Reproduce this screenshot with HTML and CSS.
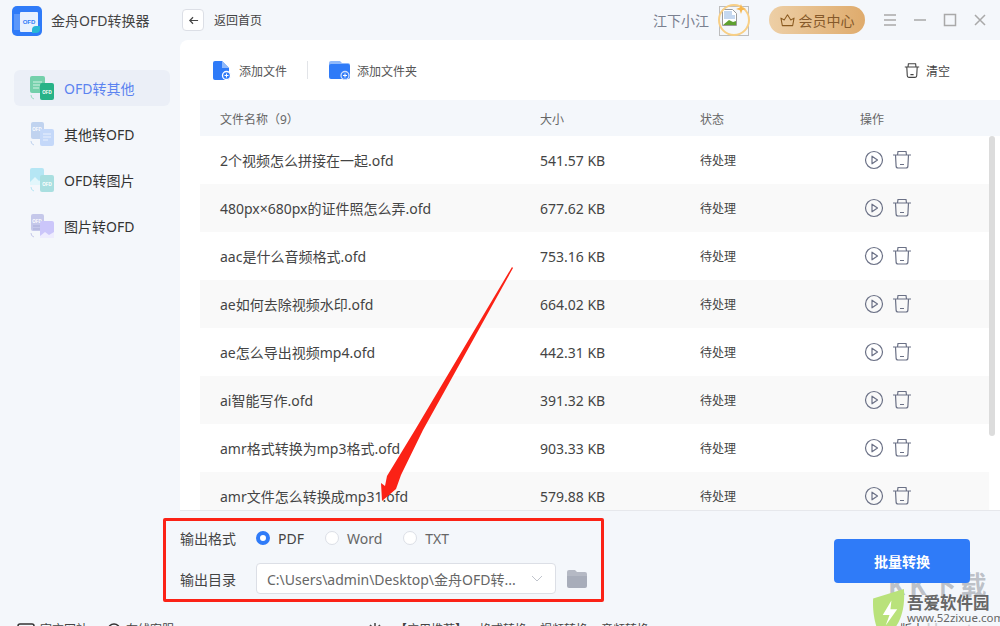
FILE: index.html
```html
<!DOCTYPE html>
<html lang="zh">
<head>
<meta charset="utf-8">
<title>金舟OFD转换器</title>
<link rel="stylesheet" href="styles.css">
</head>
<body>
<div class="app">
  <header class="topbar">
    <div class="brand">
      <svg class="logo" viewBox="0 0 30 30"><rect width="30" height="30" rx="5" fill="#2f7bf8"/><rect x="2" y="8" width="7" height="16" fill="#5b97fa"/><rect x="8" y="6" width="18" height="20" rx="1" fill="#e8f1fe"/><text x="17" y="17.500" class="logo-text">OFD</text><path d="M20 24a4 4 0 0 1 4-4h4v3a4 4 0 0 1-4 4h-4z" fill="#27b7d6"/></svg>
      <span class="brand-name">金舟OFD转换器</span>
    </div>
    <div class="back">
      <span class="back-btn"><svg viewBox="0 0 12 12" class="back-ico"><path d="M11 6H2M5.500 2.500 2 6l3.500 3.500" fill="none" stroke="#444" stroke-width="1.300"/></svg></span>
      <span class="back-text">返回首页</span>
    </div>
    <div class="top-right">
      <span class="user">江下小江</span>
      <span class="avatar">
        <svg viewBox="0 0 30 30" class="broken"><rect x=".5" y=".5" width="29" height="29" fill="none" stroke="#bdbdbd"/><path d="M3.500 3.500h10l4 4v12h-14z" fill="#fff" stroke="#9a9a9a"/><path d="M5 5h8v4h3v4H5z" fill="#c5d8f0"/><path d="M4 19l6-5 4 2 3-1v4z" fill="#5ea02f"/></svg>
        <span class="ring"></span>
        <svg viewBox="0 0 10 10" class="spark"><path d="M5 0l1.200 3.500L10 5 6.200 6.300 5 10 3.800 6.300 0 5l3.800-1.500z" fill="#f6b64e"/></svg>
      </span>
      <span class="vip">
        <svg viewBox="0 0 16 14" class="crown"><path d="M1 5l3.500 2L8 1.500 11.500 7 15 5l-1.500 8h-11z" fill="none" stroke="#8a5a20" stroke-width="1.100" stroke-linejoin="round"/></svg>
        会员中心
      </span>
      <div class="win">
        <svg viewBox="0 0 14 14" class="win-ico"><path d="M1 2h12M1 7h12M1 12h12" stroke="#a9a9a9" stroke-width="1.500"/></svg>
        <svg viewBox="0 0 14 14" class="win-ico"><path d="M1 7h12" stroke="#a9a9a9" stroke-width="1.500"/></svg>
        <svg viewBox="0 0 14 14" class="win-ico"><rect x="1.500" y="1.500" width="11" height="11" fill="none" stroke="#a9a9a9" stroke-width="1.500"/></svg>
        <svg viewBox="0 0 14 14" class="win-ico"><path d="M2 2l10 10M12 2 2 12" stroke="#a9a9a9" stroke-width="1.500"/></svg>
      </div>
    </div>
  </header>

  <div class="middle">
    <nav class="side">
      <a class="nav-item active">
        <svg viewBox="0 0 24 24" class="nav-ico"><rect x="0" y="0" width="15" height="17" rx="2" fill="#74d0ab"/><path d="M3 6h9M3 9h9M3 12h6" stroke="#d4f2e5"/><rect x="10" y="7" width="14" height="17" rx="2" fill="#27b287"/><text x="17" y="17.500" class="nav-tx">OFD</text><path d="M1 19a4 4 0 0 0 3 4" fill="none" stroke="#9adcc2"/></svg>
        <span>OFD转其他</span>
      </a>
      <a class="nav-item">
        <svg viewBox="0 0 24 24" class="nav-ico"><rect x="1" y="0" width="13" height="17" rx="2" fill="#c0d3ef"/><text x="7" y="9" class="nav-tx">OFD</text><rect x="10" y="7" width="14" height="17" rx="2" fill="#c4d8f9"/><path d="M13 12h8M13 15h8M13 18h5" stroke="#eaf1fd"/><path d="M1 19a4 4 0 0 0 3 4" fill="none" stroke="#c0d3ef"/></svg>
        <span>其他转OFD</span>
      </a>
      <a class="nav-item">
        <svg viewBox="0 0 24 24" class="nav-ico"><rect x="0" y="0" width="14" height="17" rx="2" fill="#b5e6f4"/><path d="M0 14l5-5 4 4 5-3v7H0z" fill="#e2f6fb"/><rect x="10" y="7" width="14" height="17" rx="2" fill="#a9dfe0"/><text x="17" y="17.500" class="nav-tx">OFD</text><path d="M1 19a4 4 0 0 0 3 4" fill="none" stroke="#b5e6f4"/></svg>
        <span>OFD转图片</span>
      </a>
      <a class="nav-item">
        <svg viewBox="0 0 24 24" class="nav-ico"><rect x="1" y="0" width="13" height="17" rx="2" fill="#c5c8ea"/><text x="7" y="9" class="nav-tx">OFD</text><path d="M3 12h9M3 15h9" stroke="#a9acd8"/><rect x="10" y="7" width="14" height="17" rx="2" fill="#cbc6fa"/><path d="M10 22l5-4 4 3 5-3v6H10z" fill="#eeecfe"/><path d="M1 19a4 4 0 0 0 3 4" fill="none" stroke="#c5c8ea"/></svg>
        <span>图片转OFD</span>
      </a>
    </nav>

    <main class="panel">
      <div class="toolbar">
        <div class="tool-left">
          <span class="tool">
            <svg viewBox="0 0 18 19" class="tool-ico"><path d="M0 2a2 2 0 0 1 2-2h7l7 7v10a2 2 0 0 1-2 2H2a2 2 0 0 1-2-2z" fill="#2f7bf8"/><path d="M9 0l7 7H9z" fill="#8fb9fb"/><circle cx="13.500" cy="14.500" r="4" fill="#2f7bf8" stroke="#fff" stroke-width="1.300"/><path d="M11.500 14.500h4M13.500 12.500v4" stroke="#fff"/></svg>
            添加文件
          </span>
          <span class="tool-sep"></span>
          <span class="tool tool-folder">
            <svg viewBox="0 0 21 19" class="tool-ico wide"><path d="M0 2a2 2 0 0 1 2-2h9l2 2h6a2 2 0 0 1 2 2v2H0z" fill="#8fb9fb"/><rect y="3" width="21" height="15" rx="2" fill="#2f7bf8"/><circle cx="16" cy="14.500" r="4" fill="#2f7bf8" stroke="#cfe0fc" stroke-width="1.300"/><path d="M14 14.500h4M16 12.500v4" stroke="#fff"/></svg>
            添加文件夹
          </span>
        </div>
        <span class="tool clear">
          <svg viewBox="0 0 20 20" class="clear-ico"><path d="M1 5h18M5 5l.5-4h9L15 5M3.500 5l.6 11a2 2 0 0 0 2 2h7.800a2 2 0 0 0 2-2l.6-11M8 14.500h4" fill="none" stroke="#444" stroke-width="1.400"/></svg>
          清空
        </span>
      </div>

      <div class="thead">
        <span class="c-name">文件名称（9）</span><span class="c-size">大小</span><span class="c-state">状态</span><span class="c-op">操作</span>
      </div>

      <div class="list">
        <div class="rows">
          <div class="row"><span class="c-name">2个视频怎么拼接在一起.ofd</span><span class="c-size">541.57 KB</span><span class="c-state">待处理</span><span class="c-op"><svg class="op"><use href="#play"/></svg><svg class="op"><use href="#trash"/></svg></span></div>
          <div class="row alt"><span class="c-name">480px×680px的证件照怎么弄.ofd</span><span class="c-size">677.62 KB</span><span class="c-state">待处理</span><span class="c-op"><svg class="op"><use href="#play"/></svg><svg class="op"><use href="#trash"/></svg></span></div>
          <div class="row"><span class="c-name">aac是什么音频格式.ofd</span><span class="c-size">753.16 KB</span><span class="c-state">待处理</span><span class="c-op"><svg class="op"><use href="#play"/></svg><svg class="op"><use href="#trash"/></svg></span></div>
          <div class="row alt"><span class="c-name">ae如何去除视频水印.ofd</span><span class="c-size">664.02 KB</span><span class="c-state">待处理</span><span class="c-op"><svg class="op"><use href="#play"/></svg><svg class="op"><use href="#trash"/></svg></span></div>
          <div class="row"><span class="c-name">ae怎么导出视频mp4.ofd</span><span class="c-size">442.31 KB</span><span class="c-state">待处理</span><span class="c-op"><svg class="op"><use href="#play"/></svg><svg class="op"><use href="#trash"/></svg></span></div>
          <div class="row alt"><span class="c-name">ai智能写作.ofd</span><span class="c-size">391.32 KB</span><span class="c-state">待处理</span><span class="c-op"><svg class="op"><use href="#play"/></svg><svg class="op"><use href="#trash"/></svg></span></div>
          <div class="row"><span class="c-name">amr格式转换为mp3格式.ofd</span><span class="c-size">903.33 KB</span><span class="c-state">待处理</span><span class="c-op"><svg class="op"><use href="#play"/></svg><svg class="op"><use href="#trash"/></svg></span></div>
          <div class="row alt"><span class="c-name">amr文件怎么转换成mp31.ofd</span><span class="c-size">579.88 KB</span><span class="c-state">待处理</span><span class="c-op"><svg class="op"><use href="#play"/></svg><svg class="op"><use href="#trash"/></svg></span></div>
        </div>
        <div class="scroll"><div class="thumb"></div></div>
      </div>
    </main>
  </div>

  <section class="bottom">
    <div class="output">
      <div class="out-row">
        <span class="out-label">输出格式</span>
        <span class="radio on"></span><span class="r-text dark">PDF</span>
        <span class="radio"></span><span class="r-text">Word</span>
        <span class="radio"></span><span class="r-text">TXT</span>
      </div>
      <div class="out-row">
        <span class="out-label">输出目录</span>
        <span class="select">C:\Users\admin\Desktop\金舟OFD转...<svg viewBox="0 0 12 7" class="chev"><path d="M1 1l5 5 5-5" fill="none" stroke="#c0c4cc"/></svg></span>
        <svg viewBox="0 0 20 18" class="folder"><path d="M0 2a2 2 0 0 1 2-2h6l2 2h8a2 2 0 0 1 2 2v2H0z" fill="#b5b9c4"/><path d="M0 6h20v10a2 2 0 0 1-2 2H2a2 2 0 0 1-2-2z" fill="#a8adba"/></svg>
      </div>
    </div>
    <button class="convert">批量转换</button>
  </section>

  <footer class="foot">
    <span class="foot-item"><svg viewBox="0 0 18 14" class="foot-ico"><rect x="1" y="1" width="16" height="16" rx="2" fill="none" stroke="#333" stroke-width="1.500"/></svg>官方网站</span>
    <span class="foot-item"><svg viewBox="0 0 14 14" class="foot-ico sm"><circle cx="7" cy="7" r="6" fill="none" stroke="#333" stroke-width="1.500"/></svg>在线客服</span>
    <span class="foot-mid"><svg viewBox="0 0 14 14" class="foot-ico sm"><path d="M7 0v14M0 7h14M2 2l10 10M12 2 2 12" stroke="#444" stroke-width="1.500"/></svg><span class="foot-rec">【应用推荐】</span><span>格式转换</span><span>视频转换</span><span>音频转换</span></span>
    <span class="foot-ver">版本</span>
  </footer>
</div>

<svg class="defs" aria-hidden="true">
  <symbol id="play" viewBox="0 0 20 20"><circle cx="10" cy="10" r="8.500" fill="none" stroke="#6b7186" stroke-width="1.200"/><path d="M8 6.200v7.600l5.500-3.800z" fill="none" stroke="#6b7186" stroke-width="1.200" stroke-linejoin="round"/></symbol>
  <symbol id="trash" viewBox="0 0 20 20"><path d="M1 5h18M5.500 5l.5-3.500h8L14.500 5M3.500 5l.6 11a2 2 0 0 0 2 2h7.800a2 2 0 0 0 2-2l.6-11M8 14.500h4" fill="none" stroke="#6b7186" stroke-width="1.200"/></symbol>
</svg>

<div class="overlay">
  <svg viewBox="0 0 1000 626" class="arrow"><path d="M512 267 513 268 423 430 401 475 396 489 382 501 381 483 385 486 387 476 415 430z" fill="#fb2216"/></svg>
  <div class="redbox"></div>
  <div class="watermark">
    <span class="wm-ghost">KK下载</span>
    <svg viewBox="0 0 36 52" class="shield"><path d="M1 10 33 0C35 26 26 44 10 52 3 40 0 24 1 10z" fill="#b9e27b"/><path d="M20 12 11 27h7l-4 11 12-17h-7z" fill="#fff"/></svg>
    <span class="wm-title">吾爱软件园</span>
    <span class="wm-url">www.52zixue.com</span>
    <span class="wm-faint">www.kkx.net</span>
  </div>
</div>
</body>
</html>
```
FILE: styles.css
```css
* { box-sizing: border-box; }
html, body { margin: 0; padding: 0; }
body {
  width: 1000px; height: 626px; overflow: hidden; position: relative;
  background: #f4f7fb; color: #333;
  font-family: "Noto Sans", "Noto Sans CJK SC", sans-serif; font-size: 14px;
}
.app { display: flex; flex-direction: column; height: 626px; }
.topbar { height: 40px; display: flex; align-items: center; flex-shrink: 0; }
.brand { width: 182px; padding-left: 12px; display: flex; align-items: center; gap: 9px; }
.logo { width: 30px; height: 30px; margin-top: 2px; }
.logo-text { font: bold 6px "Liberation Sans", sans-serif; fill: #2f7bf8; text-anchor: middle; }
.brand-name { font-size: 14px; color: #444; }
.back { display: flex; align-items: center; gap: 10px; }
.back-btn { width: 22px; height: 22px; border: 1px solid #dcdfe6; border-radius: 4px; background: #fff; display: flex; align-items: center; justify-content: center; }
.back-ico { width: 11px; height: 11px; }
.back-text { font-size: 12px; color: #444; }
.top-right { margin-left: auto; display: flex; align-items: center; height: 40px; }
.user { font-size: 14px; color: #7a8090; margin-right: 10px; }
.avatar { position: relative; width: 30px; height: 30px; margin-right: 20px; margin-top: 2px; }
.broken { width: 30px; height: 30px; display: block; }
.ring { position: absolute; left: -1px; top: -2px; width: 32px; height: 32px; border: 2px solid #f8cf85; border-radius: 50%; }
.spark { position: absolute; right: 3px; top: -2px; width: 10px; height: 10px; }
.vip { width: 96px; height: 28px; border-radius: 14px; background: linear-gradient(90deg, #edcfa6, #dfab6c); color: #85592a; font-size: 14px; display: flex; align-items: center; justify-content: center; gap: 4px; margin-right: 18px; }
.crown { width: 15px; height: 14px; }
.win { display: flex; gap: 16px; margin-right: 13px; }
.win-ico { width: 14px; height: 14px; }
.middle { display: flex; height: 470px; flex-shrink: 0; }
.side { width: 180px; flex-shrink: 0; padding: 30px 10px 0 14px; display: flex; flex-direction: column; gap: 10px; }
.nav-item { height: 36px; display: flex; align-items: center; gap: 10px; padding-left: 16px; border-radius: 6px; font-size: 14px; color: #333; }
.nav-item.active { background: #ebeff7; color: #5b83f0; }
.nav-ico { width: 24px; height: 24px; flex-shrink: 0; }
.nav-tx { font: bold 4.500px "Liberation Sans", sans-serif; fill: #fff; text-anchor: middle; }
.panel { flex: 1; background: #fff; border-radius: 8px 0 0 0; display: flex; flex-direction: column; overflow: hidden; }
.toolbar { height: 60px; display: flex; align-items: center; justify-content: space-between; padding: 2px 50px 0 33px; flex-shrink: 0; }
.tool-left { display: flex; align-items: center; }
.tool { display: flex; align-items: center; gap: 8px; font-size: 12px; color: #555; }
.tool-ico { width: 18px; height: 19px; margin-top: -2px; }
.tool-ico.wide { width: 21px; }
.tool-folder { gap: 7px; }
.tool-sep { width: 1px; height: 18px; background: #e2e4e8; margin: -2px 21px 0 20px; }
.clear { color: #444; gap: 6px; }
.clear-ico { width: 16px; height: 16px; margin-top: -1px; }
.thead, .row { display: flex; align-items: center; padding-left: 20px; }
.thead { height: 36px; padding-top: 2px; margin-left: 20px; width: 800px; background: #f4f7fb; font-size: 12px; color: #666; flex-shrink: 0; }
.c-name { width: 320px; flex-shrink: 0; }
.c-size { width: 160px; flex-shrink: 0; }
.c-state { width: 160px; flex-shrink: 0; }
.c-op { display: flex; align-items: center; gap: 8px; }
.list { display: flex; flex: 1; min-height: 0; margin-left: 20px; }
.rows { width: 789px; flex-shrink: 0; overflow: hidden; }
.row { height: 48px; font-size: 14px; color: #444; }
.row .c-state { font-size: 12px; color: #444; }
.row .c-op { margin-left: 4px; }
.row.alt { background: #f9f9f9; }
.op { width: 20px; height: 20px; }
.scroll { width: 11px; display: flex; justify-content: flex-start; }
.thumb { width: 6px; height: 300px; border-radius: 3px; background: #dcdcdc; }
.bottom { height: 90px; flex-shrink: 0; margin-left: 180px; border-top: 1px solid #e6e8ec; display: flex; align-items: flex-start; }
.output { display: flex; flex-direction: column; width: 654px; padding-top: 6px; }
.out-row { display: flex; align-items: center; height: 41px; font-size: 14px; color: #666; }
.out-label { width: 76px; font-size: 14px; color: #444; }
.radio { width: 14px; height: 14px; border-radius: 50%; border: 1px solid #dcdfe6; background: #fff; margin-right: 8px; }
.radio.on { border: 4px solid #2f7bf8; }
.r-text { margin-right: 21px; padding-top: 2px; }
.r-text.dark { color: #444; }
.select { width: 300px; height: 31px; border: 1px solid #dcdfe6; border-radius: 4px; background: #fff; display: flex; align-items: center; justify-content: space-between; padding: 0 12px 0 10px; font-size: 14px; color: #666; white-space: nowrap; }
.chev { width: 12px; height: 7px; }
.folder { width: 20px; height: 18px; margin-left: 11px; }
.convert { position: relative; z-index: 2; width: 136px; height: 44px; margin-top: 28px; border: 0; border-radius: 4px; background: #2f7bf8; color: #fff; font: bold 14px "Noto Sans", "Noto Sans CJK SC", sans-serif; }
.foot { display: flex; align-items: flex-start; padding: 22px 76px 0 17px; height: 26px; overflow: hidden; font-size: 12px; line-height: 16px; color: #444; flex-shrink: 0; }
.foot-item { display: flex; align-items: flex-start; gap: 5px; margin-right: 19px; flex-shrink: 0; }
.foot-mid { display: flex; align-items: flex-start; gap: 13px; margin-left: 175px; flex-shrink: 0; }
.foot-rec { margin-right: -1px; }
.foot-ver { margin-left: auto; }
.foot-ico { width: 18px; height: 14px; margin-top: 1px; }
.foot-ico.sm { width: 14px; }
.defs { position: absolute; width: 0; height: 0; }
.overlay { position: absolute; inset: 0; pointer-events: none; z-index: 1; }
.arrow { position: absolute; left: 0; top: 0; width: 1000px; height: 626px; }
.redbox { position: absolute; left: 163px; top: 518px; width: 441px; height: 84px; border: 3px solid #fb2216; border-radius: 2px; }
.watermark { position: absolute; left: 860px; top: 565px; width: 140px; height: 61px; overflow: hidden; }
.shield { position: absolute; left: 12px; top: 24px; width: 35px; height: 50px; }
.wm-ghost { position: absolute; left: 28px; top: 9px; font-size: 26px; line-height: 22px; font-weight: bold; letter-spacing: 4px; color: rgba(120,125,135,.45); white-space: nowrap; }
.wm-title { position: absolute; left: 47px; top: 29px; font-size: 16.500px; line-height: 18px; font-weight: bold; color: #666; white-space: nowrap; }
.wm-url { position: absolute; left: 47px; top: 47px; font-size: 11.500px; line-height: 11px; color: #666; white-space: nowrap; }
.wm-faint { position: absolute; left: 33px; top: 58px; font-size: 12px; line-height: 12px; font-weight: bold; color: rgba(120,125,135,.35); white-space: nowrap; }
```
